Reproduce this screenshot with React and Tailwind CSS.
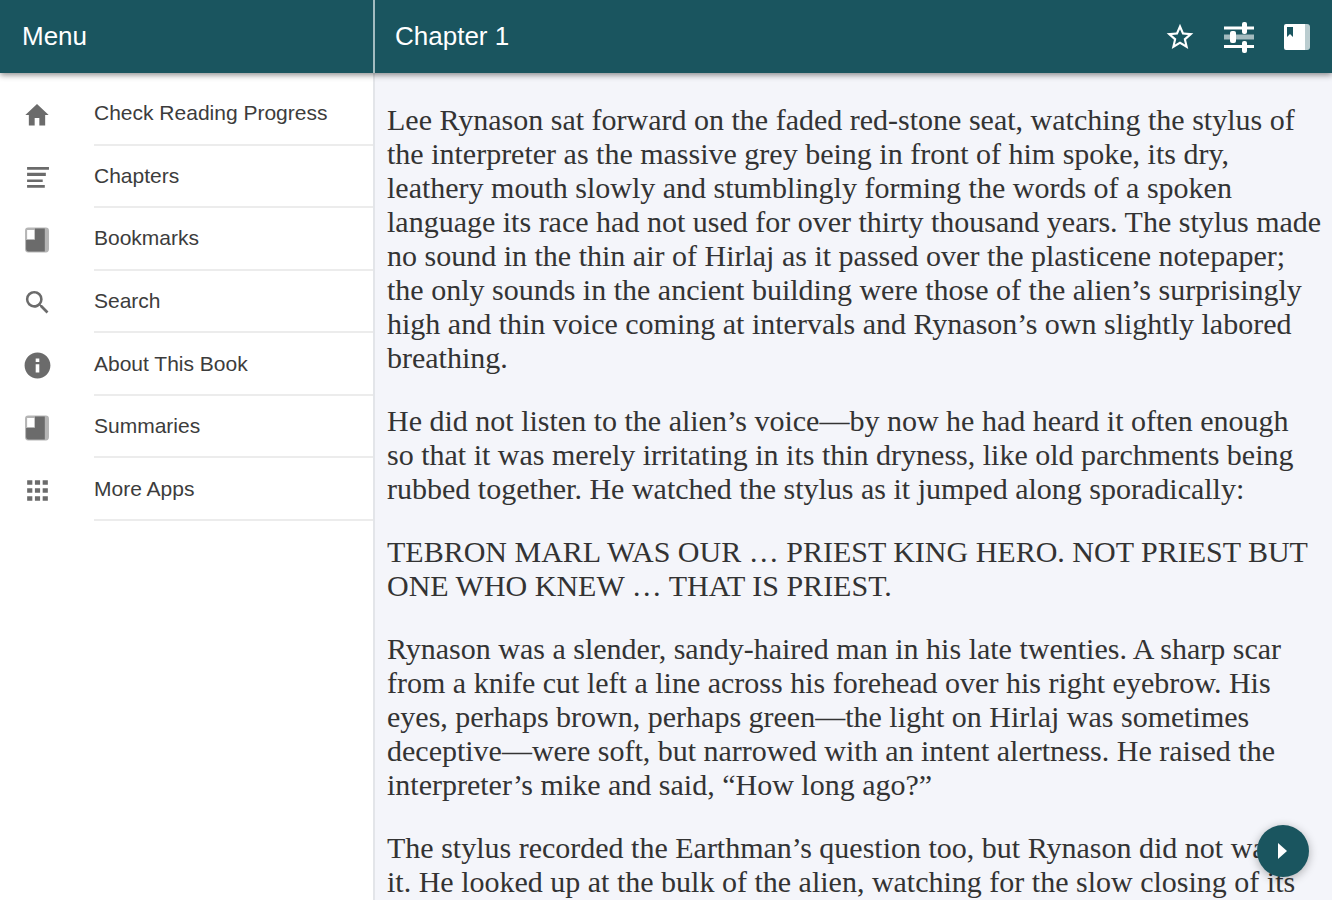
const HomeIcon = () => <path d="M10 21v-6.500h4V21h5v-9h3L12 2.500 2 12h3v9z" />;

const ChaptersIcon = () => (
  <path d="M2 2h21v2.500H2zM2 7.500h18V10.500H2zM2 13.800h15v2.500H2zM2 19.300h17v2.500H2z" />
);

const BookIcon = () => (
  <>
    <path
      opacity="0.5"
      fillRule="evenodd"
      d="M4 0h17a3 3 0 0 1 3 3v18a3 3 0 0 1-3 3H4a3 3 0 0 1-3-3V3a3 3 0 0 1 3-3zm-1 2.500V11h7V2.500z"
    />
    <path d="M10.500 1H20v22H4.500A2.500 2.500 0 0 1 2 20.500V12h8.500z" />
  </>
);

const SearchIcon = () => (
  <path d="M15.5 14h-.79l-.28-.27A6.471 6.471 0 0 0 16 9.500 6.500 6.500 0 1 0 9.500 16c1.610 0 3.090-.59 4.230-1.570l.27.28v.79l5 4.990L20.490 19l-4.990-5zm-6 0C7.010 14 5 11.990 5 9.500S7.010 5 9.500 5 14 7.010 14 9.500 11.990 14 9.500 14z" />
);

const InfoIcon = () => (
  <path d="M12 2C6.480 2 2 6.480 2 12s4.480 10 10 10 10-4.480 10-10S17.520 2 12 2zm1.400 15.500h-2.800V11h2.800zm0-8.300h-2.800V6.500h2.800z" />
);

const AppsIcon = () => (
  <path d="M4 7.500h4V4H4zM10 20h4v-3.500h-4zM4 20h4v-3.500H4zM4 13.800h4v-3.500H4zM10 13.800h4v-3.500h-4zM16 4v3.500h4V4zM10 7.500h4V4h-4zM16 13.800h4v-3.500h-4zM16 20h4v-3.500h-4z" />
);

const menuItems = [
  { label: "Check Reading Progress", icon: HomeIcon, viewBox: "0 0 24 24", size: "size-[28px]" },
  { label: "Chapters", icon: ChaptersIcon, viewBox: "0 0 24 24", size: "size-[25px]" },
  { label: "Bookmarks", icon: BookIcon, viewBox: "0 0 25 24", size: "size-[26px]" },
  { label: "Search", icon: SearchIcon, viewBox: "0 0 24 24", size: "size-[31px]" },
  { label: "About This Book", icon: InfoIcon, viewBox: "0 0 24 24", size: "size-[31px]" },
  { label: "Summaries", icon: BookIcon, viewBox: "0 0 25 24", size: "size-[26px]" },
  { label: "More Apps", icon: AppsIcon, viewBox: "0 0 24 24", size: "size-[31px]" },
];

const paragraphs = [
  "Lee Rynason sat forward on the faded red-stone seat, watching the stylus of the interpreter as the massive grey being in front of him spoke, its dry, leathery mouth slowly and stumblingly forming the words of a spoken language its race had not used for over thirty thousand years. The stylus made no sound in the thin air of Hirlaj as it passed over the plasticene notepaper; the only sounds in the ancient building were those of the alien’s surprisingly high and thin voice coming at intervals and Rynason’s own slightly labored breathing.",
  "He did not listen to the alien’s voice—by now he had heard it often enough so that it was merely irritating in its thin dryness, like old parchments being rubbed together. He watched the stylus as it jumped along sporadically:",
  "TEBRON MARL WAS OUR … PRIEST KING HERO. NOT PRIEST BUT ONE WHO KNEW … THAT IS PRIEST.",
  "Rynason was a slender, sandy-haired man in his late twenties. A sharp scar from a knife cut left a line across his forehead over his right eyebrow. His eyes, perhaps brown, perhaps green—the light on Hirlaj was sometimes deceptive—were soft, but narrowed with an intent alertness. He raised the interpreter’s mike and said, “How long ago?”",
  "The stylus recorded the Earthman’s question too, but Rynason did not watch it. He looked up at the bulk of the alien, watching for the slow closing of its",
];

const Header = () => (
  <header className="relative z-10 flex h-[73px] shrink-0 bg-[#1a555f] text-white shadow-[0_2px_6px_rgba(0,0,0,0.45)]">
    <div className="flex w-[375px] shrink-0 items-center border-r-2 border-[#a3bcc0] px-[22px] pb-[2px]">
      <h2 className="text-[26px] leading-8">Menu</h2>
    </div>
    <div className="flex flex-1 items-center justify-between px-5">
      <h1 className="pb-[2px] text-[26px] leading-8">Chapter 1</h1>
      <div className="flex items-center gap-[27px]">
        <button type="button" aria-label="Add bookmark">
          <svg viewBox="0 0 24 24" className="size-[32px]" fill="currentColor">
            <path d="M22 9.240l-7.190-.62L12 2 9.190 8.630 2 9.240l5.460 4.730L5.820 21 12 17.270 18.180 21l-1.630-7.030zM12 15.400l-3.760 2.270 1-4.280-3.320-2.880 4.380-.38L12 6.100l1.710 4.040 4.380.38-3.320 2.880 1 4.280z" />
          </svg>
        </button>
        <button type="button" aria-label="Reading settings">
          <svg viewBox="0 0 32 32" className="size-[32px]" fill="currentColor">
            <path d="M1 5.500h30v3H1zM1 24h30v3H1z" />
            <path opacity="0.6" d="M1 13.500h30v5H1z" />
            <rect x="19" y="1" width="5" height="12" rx="2" />
            <rect x="7" y="10" width="6" height="12" rx="2" />
            <rect x="19" y="20" width="5" height="12" rx="2" />
          </svg>
        </button>
        <button type="button" aria-label="Bookmarks">
          <svg viewBox="0 0 30 30" className="size-[30px]" fill="currentColor">
            <path opacity="0.7" d="M22 2h3a3 3 0 0 1 3 3v20a3 3 0 0 1-3 3h-3z" />
            <path
              fillRule="evenodd"
              d="M4 2h19v26H4a2 2 0 0 1-2-2V4a2 2 0 0 1 2-2zm1 3v10l3-3 3 3V5z"
            />
          </svg>
        </button>
      </div>
    </div>
  </header>
);

const Sidebar = () => (
  <nav className="w-[375px] shrink-0 border-r-2 border-[#e3e5e9] bg-white pt-[10px]">
    <ul className="grid h-[438px] grid-rows-7">
      {menuItems.map(({ label, icon: Icon, viewBox, size }) => (
        <li key={label}>
          <a href="#" className="flex h-full items-stretch">
            <span className="flex w-[94px] items-center pt-[2px] pl-[21px]">
              <span className="flex w-[32px] justify-center">
                <svg viewBox={viewBox} className={`${size} text-[#6b6b6b]`} fill="currentColor">
                  <Icon />
                </svg>
              </span>
            </span>
            <span className="flex flex-1 items-center border-b-2 border-[#ececec] text-[21px] leading-6 text-[#3c3c3c]">
              {label}
            </span>
          </a>
        </li>
      ))}
    </ul>
  </nav>
);

const App = () => {
  return (
    <div className="flex h-screen flex-col overflow-hidden font-['Liberation_Sans',Arial,sans-serif]">
      <Header />

      <div className="flex min-h-0 flex-1">
        <Sidebar />

        <main className="relative min-w-0 flex-1 overflow-hidden bg-[#f4f5fa] pt-[30px] pr-[10px] pl-3">
          <article className="flex flex-col gap-[29px] font-['Liberation_Serif','Times_New_Roman',serif] text-[30px] leading-[34px] text-[#333]">
            {paragraphs.map((text, i) => (
              <p key={i}>{text}</p>
            ))}
          </article>

          {/* Next page button */}
          <button
            type="button"
            aria-label="Next page"
            className="absolute right-[23px] bottom-[23px] flex size-[52px] items-center justify-center rounded-full bg-[#1a555f] text-white shadow-[0_2px_10px_rgba(0,0,0,0.3)]"
          >
            <svg viewBox="0 0 10 16" className="h-[16px] w-[10px]" fill="currentColor">
              <path d="M0 0l9 8-9 8z" />
            </svg>
          </button>
        </main>
      </div>
    </div>
  );
};

export default App;
